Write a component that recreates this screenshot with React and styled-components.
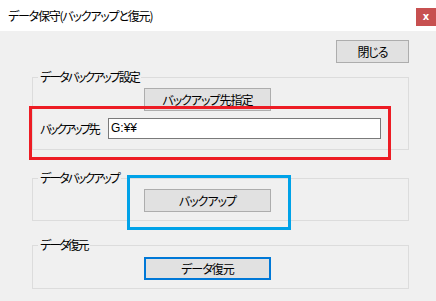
import styled, { createGlobalStyle, css } from "styled-components";

const GlobalStyle = createGlobalStyle`
  html, body {
    margin: 0;
    padding: 0;
    background: #f0f0f0;
  }
  body {
    font-family: "Noto Sans CJK JP", "Liberation Sans", sans-serif;
    font-size: 12px;
    color: #000;
  }
`;

const Window = styled.div`
  position: relative;
  width: 436px;
  height: 301px;
  display: flex;
  flex-direction: column;
  background: #f0f0f0;
  overflow: hidden;
`;

const TitleBar = styled.div`
  height: 31px;
  flex: none;
  display: flex;
  justify-content: space-between;
  align-items: flex-start;
  background: #fff;
`;

const Title = styled.div`
  padding: 8px 0 0 8px;
  line-height: 15px;
  font-size: 12px;
  font-feature-settings: "palt";
  letter-spacing: -1.2px;
  color: #000;
`;

const CloseBox = styled.div`
  margin-top: 8px;
  width: 20px;
  height: 18px;
  background: #c75050;
  color: #fff;
  font-family: "DejaVu Sans", sans-serif;
  font-weight: bold;
  font-size: 10px;
  line-height: 17px;
  text-align: center;
`;

const Body = styled.div`
  flex: 1;
  display: flex;
  flex-direction: column;
  padding: 9px 27px 0 32px;
`;

const TopRow = styled.div`
  display: flex;
  justify-content: flex-end;
`;

const Button = styled.button`
  box-sizing: border-box;
  width: ${(p) => p.$w || 127}px;
  height: ${(p) => p.$h || 23}px;
  margin: 0;
  padding: 0;
  background: #e1e1e1;
  border: 1px solid #adadad;
  font-family: inherit;
  font-size: 12px;
  font-feature-settings: "palt";
  letter-spacing: -1px;
  color: #000;
  line-height: 20px;
  ${(p) =>
    p.$default &&
    css`
      border: 2px solid #0078d7;
    `}
`;

const Group = styled.fieldset`
  margin: ${(p) => p.$gap}px 0 0;
  padding: ${(p) => p.$pt}px 0 ${(p) => p.$pb}px;
  min-width: 0;
  border: 1px solid #dcdcdc;
  display: flex;
  flex-direction: column;
`;

const Legend = styled.legend`
  margin-left: 5px;
  padding: 0 2px;
  line-height: 14px;
  font-size: 12px;
  font-feature-settings: "palt";
  letter-spacing: -2px;
`;

const ButtonRow = styled.div`
  padding-left: 111px;
  display: flex;
`;

const PathRow = styled.div`
  margin-top: 7px;
  padding-left: 7px;
  display: flex;
  align-items: center;
`;

const PathLabel = styled.span`
  width: 68px;
  flex: none;
  font-feature-settings: "palt";
  letter-spacing: -2.4px;
  white-space: nowrap;
`;

const PathInput = styled.div`
  box-sizing: border-box;
  width: 273px;
  height: 21px;
  background: #fff;
  border: 1px solid #7a7a7a;
  padding: 0 2px;
  line-height: 19px;
  font-family: "Liberation Sans", sans-serif;
  font-size: 12px;
`;

const Mark = styled.div`
  position: absolute;
  box-sizing: border-box;
  border: 3px solid ${(p) => p.$color};
  pointer-events: none;
`;

export default function App() {
  return (
    <>
      <GlobalStyle />
      <Window>
        <TitleBar>
          <Title>データ保守(バックアップと復元)</Title>
          <CloseBox>x</CloseBox>
        </TitleBar>
        <Body>
          <TopRow>
            <Button $w={73}>閉じる</Button>
          </TopRow>
          <Group $gap={7} $pt={4} $pb={10}>
            <Legend>データバックアップ設定</Legend>
            <ButtonRow>
              <Button>バックアップ先指定</Button>
            </ButtonRow>
            <PathRow>
              <PathLabel>バックアップ先</PathLabel>
              <PathInput>G:¥¥</PathInput>
            </PathRow>
          </Group>
          <Group $gap={21} $pt={4} $pb={8}>
            <Legend>データバックアップ</Legend>
            <ButtonRow>
              <Button>バックアップ</Button>
            </ButtonRow>
          </Group>
          <Group $gap={17} $pt={5} $pb={8}>
            <Legend>データ復元</Legend>
            <ButtonRow>
              <Button $default>データ復元</Button>
            </ButtonRow>
          </Group>
        </Body>
        <Mark $color="#ed1c24" style={{ left: 29, top: 106, width: 362, height: 54 }} />
        <Mark $color="#00a2e8" style={{ left: 127, top: 175, width: 164, height: 55 }} />
      </Window>
    </>
  );
}
